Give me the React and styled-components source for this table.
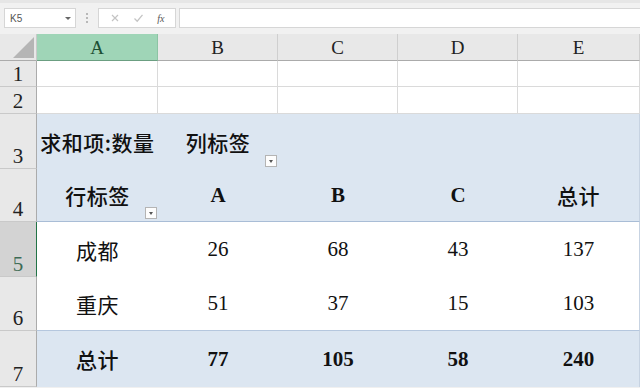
import React from "react";
import styled, { createGlobalStyle, css } from "styled-components";

const GlobalStyle = createGlobalStyle`
  html, body { margin: 0; padding: 0; background: #ffffff; }
  body { width: 640px; height: 388px; overflow: hidden; }
  * { box-sizing: border-box; }
`;

const Page = styled.div`
  width: 640px;
  height: 388px;
  display: flex;
  flex-direction: column;
  background: #f0f0f0;
`;

const Toolbar = styled.div`
  height: 34px;
  display: flex;
  align-items: flex-start;
  padding: 5px 0 0 4px;
  background: #f1f1f1;
  border-top: 3px solid #e6e6e6;
`;

const NameBox = styled.div`
  width: 72px;
  height: 20px;
  background: #fff;
  border: 1px solid #d6d6d6;
  display: flex;
  align-items: center;
  justify-content: space-between;
  padding: 0 4px 0 5px;
  font-family: "Liberation Sans", Arial, sans-serif;
  font-size: 10px;
  color: #555;
`;

const Caret = styled.span`
  width: 0;
  height: 0;
  border-left: 3px solid transparent;
  border-right: 3px solid transparent;
  border-top: 3px solid #666;
`;

const Dots = styled.div`
  width: 22px;
  height: 20px;
  display: flex;
  flex-direction: column;
  align-items: center;
  justify-content: center;
  gap: 2px;
`;

const Dot = styled.span`
  width: 2px;
  height: 2px;
  background: #b8b8b8;
`;

const FuncBox = styled.div`
  width: 78px;
  height: 20px;
  background: #fff;
  border: 1px solid #d6d6d6;
  display: flex;
  align-items: center;
  justify-content: space-around;
  padding: 0 4px;
`;

const FxText = styled.span`
  font-family: "Liberation Serif", serif;
  font-style: italic;
  font-size: 10px;
  color: #555;
`;

const FormulaInput = styled.div`
  flex: 1;
  height: 20px;
  margin-left: 3px;
  background: #fff;
  border: 1px solid #d6d6d6;
  border-right: none;
`;

const Sheet = styled.div`
  display: grid;
  grid-template-columns: 37px 121px 120px 120px 120px 1fr;
  grid-template-rows: 27px 26px 27px 55px 53px 55px 54px 56px;
  background: #fff;
  font-family: "Liberation Serif", "Noto Sans CJK SC", serif;
`;

const Corner = styled.div`
  background: #e8e8e8;
  border-right: 1px solid #c9c9c9;
  border-bottom: 1px solid #ababab;
  display: flex;
  align-items: flex-end;
  justify-content: flex-end;
  padding: 0 2px 2px 0;
`;

const ColHead = styled.div`
  display: flex;
  align-items: center;
  justify-content: center;
  font-family: "Liberation Serif", serif;
  font-size: 19px;
  padding-top: 1px;
  color: ${(p) => (p.$active ? "#1c4f33" : "#222")};
  background: ${(p) => (p.$active ? "#9fd5b7" : "#e8e8e8")};
  border-right: 1px solid ${(p) => (p.$active ? "#8cc4a4" : "#cfcfcf")};
  border-bottom: 1px solid ${(p) => (p.$active ? "#6b9e81" : "#ababab")};
`;

const RowHead = styled.div`
  display: flex;
  align-items: flex-end;
  justify-content: center;
  padding-bottom: 1px;
  font-family: "Liberation Serif", serif;
  font-size: 21px;
  line-height: 22px;
  color: ${(p) => (p.$active ? "#3d6b55" : "#222")};
  background: ${(p) => (p.$active ? "#d3d3d3" : "#e8e8e8")};
  border-bottom: 1px solid #c9c9c9;
  border-right: ${(p) => (p.$active ? "1px solid #217346" : "1px solid #ababab")};
`;

const variants = {
  plain: css`
    background: #fff;
    border-right: 1px solid #dadada;
    border-bottom: 1px solid #dadada;
  `,
  head: css`
    background: #dce6f1;
    font-weight: bold;
  `,
  headLast: css`
    background: #dce6f1;
    font-weight: bold;
    border-bottom: 1px solid #a9bdd6;
  `,
  body: css`
    background: #fff;
  `,
  bodyLast: css`
    background: #fff;
    border-bottom: 1px solid #b5c7de;
  `,
  total: css`
    background: #dce6f1;
    font-weight: bold;
  `,
};

const Cell = styled.div`
  position: relative;
  display: flex;
  align-items: center;
  justify-content: center;
  font-size: 21px;
  color: #111;
  white-space: nowrap;
  ${(p) => variants[p.$variant]}
  ${(p) => p.$edge && css`border-right: 1px solid #c7d3e2;`}
`;

const Cjk = styled.span`
  font-family: "Noto Sans CJK SC", sans-serif;
  font-weight: ${(p) => (p.$strong ? 500 : 400)};
  letter-spacing: 0.5px;
`;

const FilterBtn = styled.span`
  position: absolute;
  right: 1px;
  bottom: 2px;
  width: 12px;
  height: 12px;
  background: #fdfdfd;
  border: 1px solid #b4b4b4;
  display: flex;
  align-items: center;
  justify-content: center;
`;

const FilterArrow = styled.span`
  width: 0;
  height: 0;
  border-left: 2.5px solid transparent;
  border-right: 2.5px solid transparent;
  border-top: 3px solid #555;
`;

const Filter = () => (
  <FilterBtn>
    <FilterArrow />
  </FilterBtn>
);

const cols = ["A", "B", "C", "D", "E"];

const rows = [
  { n: 1, variant: "plain", cells: ["", "", "", "", ""] },
  { n: 2, variant: "plain", cells: ["", "", "", "", ""] },
  { n: 3, variant: "head", cells: ["求和项:数量", "列标签", "", "", ""], filter: 1 },
  { n: 4, variant: "headLast", cells: ["行标签", "A", "B", "C", "总计"], filter: 0 },
  { n: 5, variant: "body", cells: ["成都", "26", "68", "43", "137"], active: true },
  { n: 6, variant: "bodyLast", cells: ["重庆", "51", "37", "15", "103"] },
  { n: 7, variant: "total", cells: ["总计", "77", "105", "58", "240"] },
];

const isCjk = (s) => /[\u4e00-\u9fff]/.test(s);

export default function App() {
  return (
    <>
      <GlobalStyle />
      <Page>
        <Toolbar>
          <NameBox>
            <span>K5</span>
            <Caret />
          </NameBox>
          <Dots>
            <Dot />
            <Dot />
            <Dot />
          </Dots>
          <FuncBox>
            <svg width="10" height="10" viewBox="0 0 10 10">
              <path d="M2 2 L8 8 M8 2 L2 8" stroke="#c4c4c4" strokeWidth="1.2" fill="none" />
            </svg>
            <svg width="11" height="10" viewBox="0 0 11 10">
              <path d="M1.5 5.5 L4.2 8.2 L9.5 1.8" stroke="#c4c4c4" strokeWidth="1.3" fill="none" />
            </svg>
            <FxText>fx</FxText>
          </FuncBox>
          <FormulaInput />
        </Toolbar>
        <Sheet>
          <Corner>
            <svg width="21" height="21" viewBox="0 0 21 21">
              <path d="M21 0 L21 21 L0 21 Z" fill="#b5b5b5" />
            </svg>
          </Corner>
          {cols.map((c) => (
            <ColHead key={c} $active={c === "A"}>
              {c}
            </ColHead>
          ))}
          {rows.map((r) => (
            <React.Fragment key={r.n}>
              <RowHead $active={r.active}>{r.n}</RowHead>
              {r.cells.map((v, i) => (
                <Cell key={i} $variant={r.variant} $edge={i === 4 && r.variant !== "plain"}>
                  {isCjk(v) ? (
                    <Cjk $strong={r.variant === "head" || r.variant === "headLast" || r.variant === "total"}>{v}</Cjk>
                  ) : (
                    v
                  )}
                  {r.filter === i && <Filter />}
                </Cell>
              ))}
            </React.Fragment>
          ))}
        </Sheet>
      </Page>
    </>
  );
}
